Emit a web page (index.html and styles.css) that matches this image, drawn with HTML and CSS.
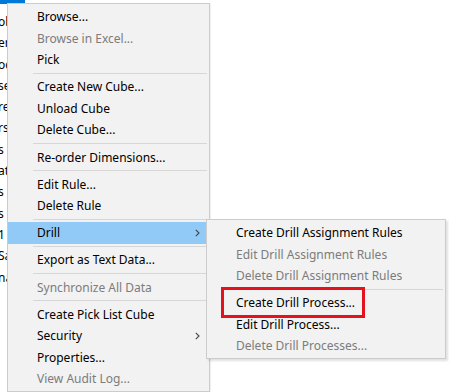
FILE: index.html
```html
<!DOCTYPE html>
<html>
<head>
<meta charset="utf-8">
<link rel="stylesheet" href="styles.css">
</head>
<body>
<div class="tree">
  <div class="row sel">ata</div>
  <div class="row">ob</div>
  <div class="row">er</div>
  <div class="row">oc</div>
  <div class="row">se</div>
  <div class="row">re</div>
  <div class="row">rs</div>
  <div class="row">s</div>
  <div class="row">at</div>
  <div class="row">s</div>
  <div class="row">s</div>
  <div class="row">1</div>
  <div class="row">Sa</div>
  <div class="row">na</div>
</div>

<div class="menu main">
  <div class="item">Browse...</div>
  <div class="item off">Browse in Excel...</div>
  <div class="item">Pick</div>
  <div class="sep"></div>
  <div class="item">Create New Cube...</div>
  <div class="item">Unload Cube</div>
  <div class="item">Delete Cube...</div>
  <div class="sep"></div>
  <div class="item">Re-order Dimensions...</div>
  <div class="sep"></div>
  <div class="item">Edit Rule...</div>
  <div class="item">Delete Rule</div>
  <div class="sep"></div>
  <div class="item hot">Drill<svg class="arrow" width="5" height="8" viewBox="0 0 5 8"><path d="M0.8 0.8 L4 4 L0.8 7.2" fill="none" stroke="#444" stroke-width="1.1"/></svg></div>
  <div class="sep"></div>
  <div class="item">Export as Text Data...</div>
  <div class="sep"></div>
  <div class="item off">Synchronize All Data</div>
  <div class="sep"></div>
  <div class="item">Create Pick List Cube</div>
  <div class="item">Security<svg class="arrow" width="5" height="8" viewBox="0 0 5 8"><path d="M0.8 0.8 L4 4 L0.8 7.2" fill="none" stroke="#444" stroke-width="1.1"/></svg></div>
  <div class="item">Properties...</div>
  <div class="item off">View Audit Log...</div>
</div>

<div class="menu sub">
  <div class="item">Create Drill Assignment Rules</div>
  <div class="item off">Edit Drill Assignment Rules</div>
  <div class="item off">Delete Drill Assignment Rules</div>
  <div class="sep"></div>
  <div class="item marked">Create Drill Process...<span class="mark"></span></div>
  <div class="item">Edit Drill Process...</div>
  <div class="item off">Delete Drill Processes...</div>
</div>
</body>
</html>
```

FILE: styles.css
```css
html, body {
  margin: 0;
  padding: 0;
  background: #ffffff;
  width: 449px;
  height: 392px;
  overflow: hidden;
  font-family: "Segoe UI", "Noto Sans", "Open Sans", sans-serif;
  font-size: 12px;
  color: #000;
}

.tree {
  display: flex;
  flex-direction: column;
  margin-top: -13px;
}

.tree .row {
  height: 21.3px;
  line-height: 21.3px;
  margin-left: -2px;
  white-space: nowrap;
}

.tree .row.sel {
  width: 27px;
  background: #0078d7;
  color: #fff;
  height: 17px;
  line-height: 17px;
  margin-bottom: 7px;
}

.menu {
  position: absolute;
  box-sizing: border-box;
  background: #f2f2f2;
  border: 1px solid #cccccc;
  display: flex;
  flex-direction: column;
}

.main {
  left: 7px;
  top: 3px;
  width: 203px;
  padding: 2px 0 1px 0;
  box-shadow: 1px 1px 1px rgba(0,0,0,0.06);
}

.sub {
  left: 206px;
  top: 219px;
  width: 240px;
  padding: 2px 0 1px 0;
  box-shadow: 2px 2px 2px rgba(0,0,0,0.12);
}

.item {
  position: relative;
  height: 21.6px;
  line-height: 21.6px;
  padding-left: 29px;
  white-space: nowrap;
  display: flex;
  align-items: center;
}

.item.off {
  color: #7c7c7c;
}

.item.hot {
  background: #91c9f7;
}

.arrow {
  margin-left: auto;
  margin-right: 9px;
}

.sep {
  height: 1px;
  background: #d7d7d7;
  margin: 2.25px 2px 2.25px 25px;
}

.mark {
  position: absolute;
  left: 14px;
  top: -5px;
  width: 138px;
  height: 25px;
  border: 3px solid #e3121c;
}
```
